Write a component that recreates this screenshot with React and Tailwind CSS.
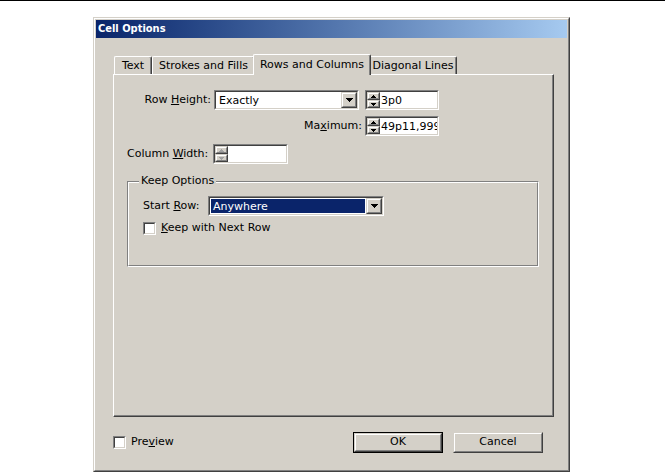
import React from "react";

function DownArrow({ color = "#000" }) {
  return (
    <svg width="7" height="4" viewBox="0 0 7 4" shapeRendering="crispEdges">
      <path d="M0 0h7v1h-1v1h-1v1h-1v1h-1v-1h-1v-1h-1v-1h-1z" fill={color} />
    </svg>
  );
}

function SmallArrow({ up, color = "#000" }) {
  return (
    <svg width="5" height="3" viewBox="0 0 5 3" shapeRendering="crispEdges">
      {up ? (
        <path d="M2 0h1v1h1v1h1v1h-5v-1h1v-1h1z" fill={color} />
      ) : (
        <path d="M0 0h5v1h-1v1h-1v1h-1v-1h-1v-1h-1z" fill={color} />
      )}
    </svg>
  );
}

function Sunken({ className, children, bg = "bg-white" }) {
  return (
    <div className={`border border-t-[#808080] border-l-[#808080] border-b-white border-r-white ${className}`}>
      <div className={`w-full h-full border border-t-[#404040] border-l-[#404040] border-b-[#d4d0c8] border-r-[#d4d0c8] flex ${bg}`}>
        {children}
      </div>
    </div>
  );
}

function RaisedBtn({ className, children }) {
  return (
    <div className={`border border-t-[#d4d0c8] border-l-[#d4d0c8] border-b-[#404040] border-r-[#404040] ${className}`}>
      <div className="w-full h-full border border-t-white border-l-white border-b-[#808080] border-r-[#808080] bg-[#d4d0c8] flex items-center justify-center">
        {children}
      </div>
    </div>
  );
}

function Spinner({ disabled }) {
  const c = disabled ? "#a0a0a0" : "#000";
  return (
    <div className="w-[13px] h-full flex flex-col bg-[#d4d0c8]">
      <RaisedBtn className="w-[13px] h-[8px]">
        <SmallArrow up color={c} />
      </RaisedBtn>
      <RaisedBtn className="w-[13px] h-[8px]">
        <SmallArrow color={c} />
      </RaisedBtn>
    </div>
  );
}

function SpinField({ value, width, disabled }) {
  return (
    <Sunken className={`${width} h-[20px]`}>
      <Spinner disabled={disabled} />
      <div className="flex-1 flex items-center pl-[1px] overflow-hidden whitespace-nowrap leading-none">
        {value}
      </div>
    </Sunken>
  );
}

function Select({ width, value, highlighted }) {
  return (
    <Sunken className={`${width} h-[20px]`}>
      <div className="flex-1 flex items-center p-px">
        <div
          className={`w-full h-full flex items-center pl-[2px] leading-none ${
            highlighted ? "bg-[#0a246a] text-white" : ""
          }`}
        >
          {value}
        </div>
      </div>
      <RaisedBtn className="w-[16px] h-[16px]">
        <DownArrow />
      </RaisedBtn>
    </Sunken>
  );
}

function Checkbox() {
  return <Sunken className="w-[13px] h-[13px]" />;
}

function Tab({ children, w, selected }) {
  if (selected) {
    return (
      <div
        className={`${w} h-[21px] -mx-[2px] -mb-px relative z-10 bg-[#d4d0c8] border-l border-t border-r border-l-white border-t-white border-r-[#404040] shadow-[inset_-1px_0_0_#808080] rounded-tl-[2px] rounded-tr-[2px] flex items-start justify-center pt-[3px] leading-[14px]`}
      >
        {children}
      </div>
    );
  }
  return (
    <div
      className={`${w} h-[18px] border-l border-t border-r border-l-white border-t-white border-r-[#404040] shadow-[inset_-1px_0_0_#808080] rounded-tl-[2px] rounded-tr-[2px] flex items-start justify-center pt-[2px] leading-[14px]`}
    >
      {children}
    </div>
  );
}

export default function App() {
  return (
    <div className="w-[665px] h-[472px] bg-white overflow-hidden font-['DejaVu_Sans',sans-serif] text-[11px] text-black">
      <div className="h-px bg-black" />
      <div className="ml-[93px] mt-[16px] w-[477px] h-[455px] border border-t-[#d4d0c8] border-l-[#d4d0c8] border-r-[#404040] border-b-[#404040]">
        <div className="h-full border border-t-white border-l-white border-r-[#808080] border-b-[#808080] bg-[#d4d0c8] p-px flex flex-col">
          <div className="h-[18px] bg-gradient-to-r from-[#0a246a] to-[#a6caf0] flex items-center pl-[2px] text-white font-bold text-[11px] font-['DejaVu_Sans_Condensed','DejaVu_Sans',sans-serif]">
            Cell Options
          </div>
          <div className="pl-[17px] pt-[16px] flex flex-col">
            {/* tabs */}
            <div className="flex items-end h-[20px] pl-px">
              <Tab w="w-[38px]">Text</Tab>
              <Tab w="w-[103px]">Strokes and Fills</Tab>
              <Tab w="w-[118px]" selected>
                Rows and Columns
              </Tab>
              <Tab w="w-[88px]">Diagonal Lines</Tab>
            </div>
            {/* panel */}
            <div className="w-[441px] h-[343px] border-l border-t border-r border-b border-l-white border-t-white border-r-[#404040] border-b-[#404040] shadow-[inset_-1px_-1px_0_#808080] flex flex-col pt-[15px]">
              <div className="flex items-center h-[20px]">
                <div className="w-[97px] text-right">
                  Row <span className="underline">H</span>eight:
                </div>
                <div className="ml-[3px]">
                  <Select width="w-[145px]" value="Exactly" />
                </div>
                <div className="ml-[6px]">
                  <SpinField width="w-[74px]" value="3p0" />
                </div>
              </div>
              <div className="flex items-center h-[20px] mt-[6px]">
                <div className="w-[248px] text-right">
                  Ma<span className="underline">x</span>imum:
                </div>
                <div className="ml-[3px]">
                  <SpinField width="w-[74px]" value="49p11,999" />
                </div>
              </div>
              <div className="flex items-center h-[20px] mt-[8px] pl-[13px]">
                <div className="w-[86px]">
                  Column <span className="underline">W</span>idth:
                </div>
                <SpinField width="w-[75px]" value="" disabled />
              </div>
              {/* group */}
              <div className="ml-[13px] mt-[17px] w-[412px] h-[86px] relative border border-t-[#808080] border-l-[#808080] border-b-white border-r-white">
                <div className="w-full h-full border border-t-white border-l-white border-b-[#808080] border-r-[#808080] flex flex-col pt-[13px] pl-[14px]">
                  <div className="flex items-center h-[20px]">
                    <div className="w-[65px]">
                      Start <span className="underline">R</span>ow:
                    </div>
                    <Select width="w-[176px]" value="Anywhere" highlighted />
                  </div>
                  <div className="flex items-center mt-[4px]">
                    <Checkbox />
                    <span className="ml-[5px]">
                      <span className="underline">K</span>eep with Next Row
                    </span>
                  </div>
                </div>
                <div className="absolute left-[11px] -top-[8px] px-[2px] bg-[#d4d0c8] leading-[14px]">
                  Keep Options
                </div>
              </div>
            </div>
            {/* bottom row */}
            <div className="w-[441px] flex items-center mt-[15px]">
              <Checkbox />
              <span className="ml-[5px]">
                Pre<span className="underline">v</span>iew
              </span>
              <div className="ml-auto border border-black">
                <RaisedBtn className="w-[88px] h-[19px]">OK</RaisedBtn>
              </div>
              <RaisedBtn className="ml-[10px] mr-[11px] w-[90px] h-[21px]">Cancel</RaisedBtn>
            </div>
          </div>
        </div>
      </div>
    </div>
  );
}
